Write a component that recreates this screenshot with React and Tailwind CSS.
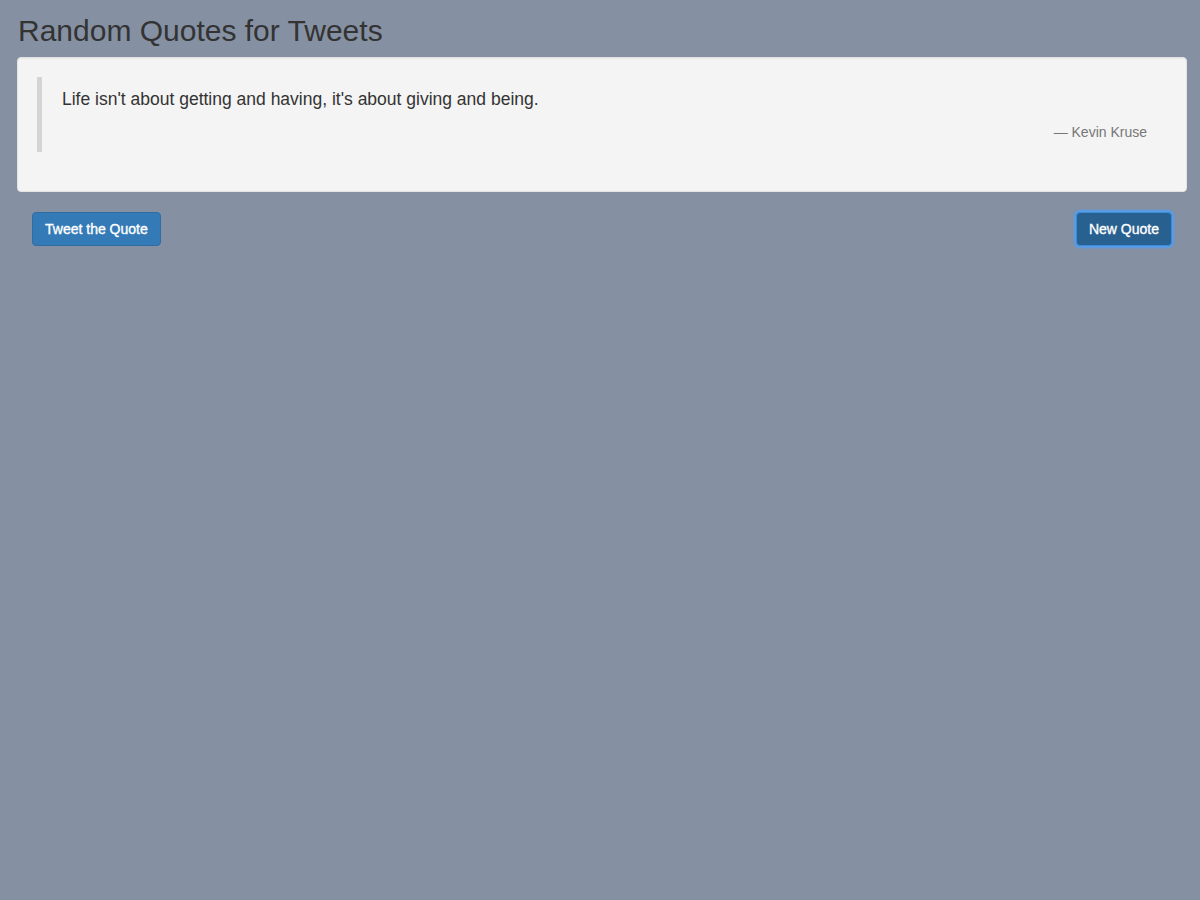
import React from 'react';

const App = () => {
  return (
    <div className="min-h-[900px] bg-[#8590a3] pl-[17px] pr-[13px] pt-[14px] font-['Liberation_Sans',Arial,sans-serif] text-[#333]">
      <h1 className="text-[30px] leading-[33px] mb-[10px] pl-px">Random Quotes for Tweets</h1>

      {/* Quote well */}
      <div className="bg-[#f4f4f4] border border-[#e3e3e3] rounded-[4px] p-[19px] shadow-[inset_0_1px_1px_rgba(0,0,0,0.05)]">
        <blockquote className="border-l-[5px] border-[#d4d4d4] py-[10px] px-[20px] mb-[20px]">
          <p className="text-[17.5px] leading-[25px] mb-[10px] text-[#333]">
            Life isn't about getting and having, it's about giving and being.
          </p>
          <footer className="text-right text-[14px] leading-[20px] text-[#777]">
            — Kevin Kruse
          </footer>
        </blockquote>
      </div>

      {/* Actions */}
      <div className="flex justify-between px-[15px] mt-[20px]">
        <button className="h-[34px] px-[12px] bg-[#337ab7] border border-[#2e6da4] rounded-[4px] text-white text-[14px] [-webkit-text-stroke:0.35px_white]">
          Tweet the Quote
        </button>
        <button className="h-[34px] px-[12px] bg-[#286090] border border-[#3f8ad8] rounded-[4px] text-white text-[14px] [-webkit-text-stroke:0.35px_white] shadow-[0_0_2px_2px_rgba(80,158,240,0.95)]">
          New Quote
        </button>
      </div>
    </div>
  );
};

export default App;
